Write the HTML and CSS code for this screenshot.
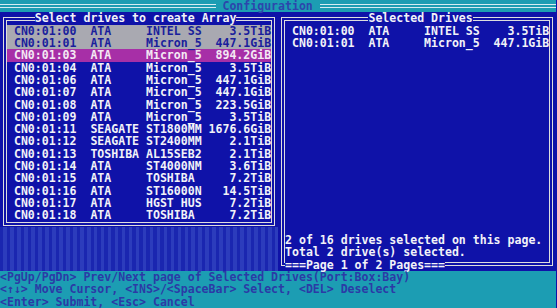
FILE: index.html
```
<!DOCTYPE html>
<html>
	<head>
		<meta charset="UTF-8">
		<title>Configuration</title>
		<link rel="stylesheet" href="styles.css">
	</head>

	<body>
		<div class="screen">

			<!-- title row -->
			<div class="topbar">
				<span class="hline lead"></span>
				<span class="topbar-title"> Configuration </span>
				<span class="hline"></span>
			</div>

			<div class="main">

				<!-- left: all drives on this page -->
				<div class="col">
					<div class="panel panel-drives">
						<div class="panel-title title-left">Select drives to create Array</div>
						<div class="drive checked"><span>CN0:01:00</span><span>ATA</span><span>INTEL SS</span><span class="size">3.5TiB</span></div>
						<div class="drive checked"><span>CN0:01:01</span><span>ATA</span><span>Micron_5</span><span class="size">447.1GiB</span></div>
						<div class="drive cursor"><span>CN0:01:03</span><span>ATA</span><span>Micron_5</span><span class="size">894.2GiB</span></div>
						<div class="drive"><span>CN0:01:04</span><span>ATA</span><span>Micron_5</span><span class="size">3.5TiB</span></div>
						<div class="drive"><span>CN0:01:06</span><span>ATA</span><span>Micron_5</span><span class="size">447.1GiB</span></div>
						<div class="drive"><span>CN0:01:07</span><span>ATA</span><span>Micron_5</span><span class="size">447.1GiB</span></div>
						<div class="drive"><span>CN0:01:08</span><span>ATA</span><span>Micron_5</span><span class="size">223.5GiB</span></div>
						<div class="drive"><span>CN0:01:09</span><span>ATA</span><span>Micron_5</span><span class="size">3.5TiB</span></div>
						<div class="drive"><span>CN0:01:11</span><span>SEAGATE</span><span>ST1800MM</span><span class="size">1676.6GiB</span></div>
						<div class="drive"><span>CN0:01:12</span><span>SEAGATE</span><span>ST2400MM</span><span class="size">2.1TiB</span></div>
						<div class="drive"><span>CN0:01:13</span><span>TOSHIBA</span><span>AL15SEB2</span><span class="size">2.1TiB</span></div>
						<div class="drive"><span>CN0:01:14</span><span>ATA</span><span>ST4000NM</span><span class="size">3.6TiB</span></div>
						<div class="drive"><span>CN0:01:15</span><span>ATA</span><span>TOSHIBA</span><span class="size">7.2TiB</span></div>
						<div class="drive"><span>CN0:01:16</span><span>ATA</span><span>ST16000N</span><span class="size">14.5TiB</span></div>
						<div class="drive"><span>CN0:01:17</span><span>ATA</span><span>HGST HUS</span><span class="size">7.2TiB</span></div>
						<div class="drive"><span>CN0:01:18</span><span>ATA</span><span>TOSHIBA</span><span class="size">7.2TiB</span></div>
					</div>
					<div class="shade"></div>
				</div>

				<!-- right: drives picked so far -->
				<div class="col">
					<div class="panel panel-selected">
						<div class="panel-title title-right">Selected Drives</div>
						<div class="drive"><span>CN0:01:00</span><span>ATA</span><span>INTEL SS</span><span class="size">3.5TiB</span></div>
						<div class="drive"><span>CN0:01:01</span><span>ATA</span><span>Micron_5</span><span class="size">447.1GiB</span></div>
						<div class="spacer"></div>
						<div class="status">2 of 16 drives selected on this page.</div>
						<div class="status">Total 2 drive(s) selected.</div>
						<div class="panel-foot">===Page 1 of 2 Pages===</div>
					</div>
				</div>

			</div>

			<!-- key help -->
			<div class="help">
				<div class="help-line">&lt;PgUp/PgDn&gt; Prev/Next page of Selected Drives(Port:Box:Bay)</div>
				<div class="help-line">&lt;↑↓&gt; Move Cursor, &lt;INS&gt;/&lt;SpaceBar&gt; Select, &lt;DEL&gt; Deselect</div>
				<div class="help-line">&lt;Enter&gt; Submit, &lt;Esc&gt; Cancel</div>
			</div>

		</div>
	</body>
</html>
```

FILE: styles.css
```
/* 80 x 25 text screen: 1ch = 6.9625px, one row = 12.32px */
body {
	margin: 0;
	background-color: #0f12a8;
	font-family: "DejaVu Sans Mono", "Liberation Mono", monospace;
	font-weight: bold;
	font-size: 11.565px;
	line-height: 12.32px;
	color: #f2f2f8;
}
.screen {
	width: 80ch;
	height: 308px;
	overflow: hidden;
}
.topbar {
	display: flex;
	height: 12.32px;
	background-color: #1c9db3;
}
.hline {
	flex: 1;
	margin-top: 4px;
	height: 0;
	border-top: 4px double #d6ecf2;
}
.hline.lead {
	flex: none;
	width: 31ch;
}
.topbar-title {
	white-space: pre;
	color: #2c46ac;
}
.main {
	display: flex;
	height: 258.72px;
}
.col {
	display: flex;
	flex-direction: column;
	width: 40ch;
}
.panel {
	width: 38ch;
	margin: 4.2px 0 0 3px;
	border: 4px double #dedede;
}
.panel-drives {
	padding-bottom: 0.24px;
}
.panel-selected {
	flex: 1;
	display: flex;
	flex-direction: column;
	margin-bottom: 5.04px;
}
.panel-title {
	width: max-content;
	margin-top: -8.2px;
	height: 12.32px;
	background-color: #0f12a8;
}
.title-left {
	margin-left: 4ch;
}
.title-right {
	margin-left: 12ch;
}
.panel-foot {
	width: max-content;
	height: 12.32px;
	margin-bottom: -9.04px;
	background-color: #0f12a8;
}
.drive {
	display: grid;
	grid-template-columns: 11ch 8ch 8ch 10ch;
	height: 12.32px;
	padding-left: 1ch;
	white-space: pre;
}
.size {
	text-align: right;
}
.drive.checked {
	background-color: #a9a9b1;
	color: #1a1e9c;
}
.drive.cursor {
	background-color: #a72fa7;
	color: #f4e8f4;
}
.spacer {
	flex: 1;
}
.status {
	height: 12.32px;
	white-space: pre;
}
.shade {
	flex: 1;
	margin-top: 1px;
	background: repeating-linear-gradient(90deg, #1a26b0 0, #1a26b0 3.5px, #2c3cbc 3.5px, #2c3cbc 6.9625px);
}
.help {
	height: 36.96px;
	background-color: #1c9db3;
	color: #2b3aa6;
}
.help-line {
	height: 12.32px;
	white-space: pre;
}
```
